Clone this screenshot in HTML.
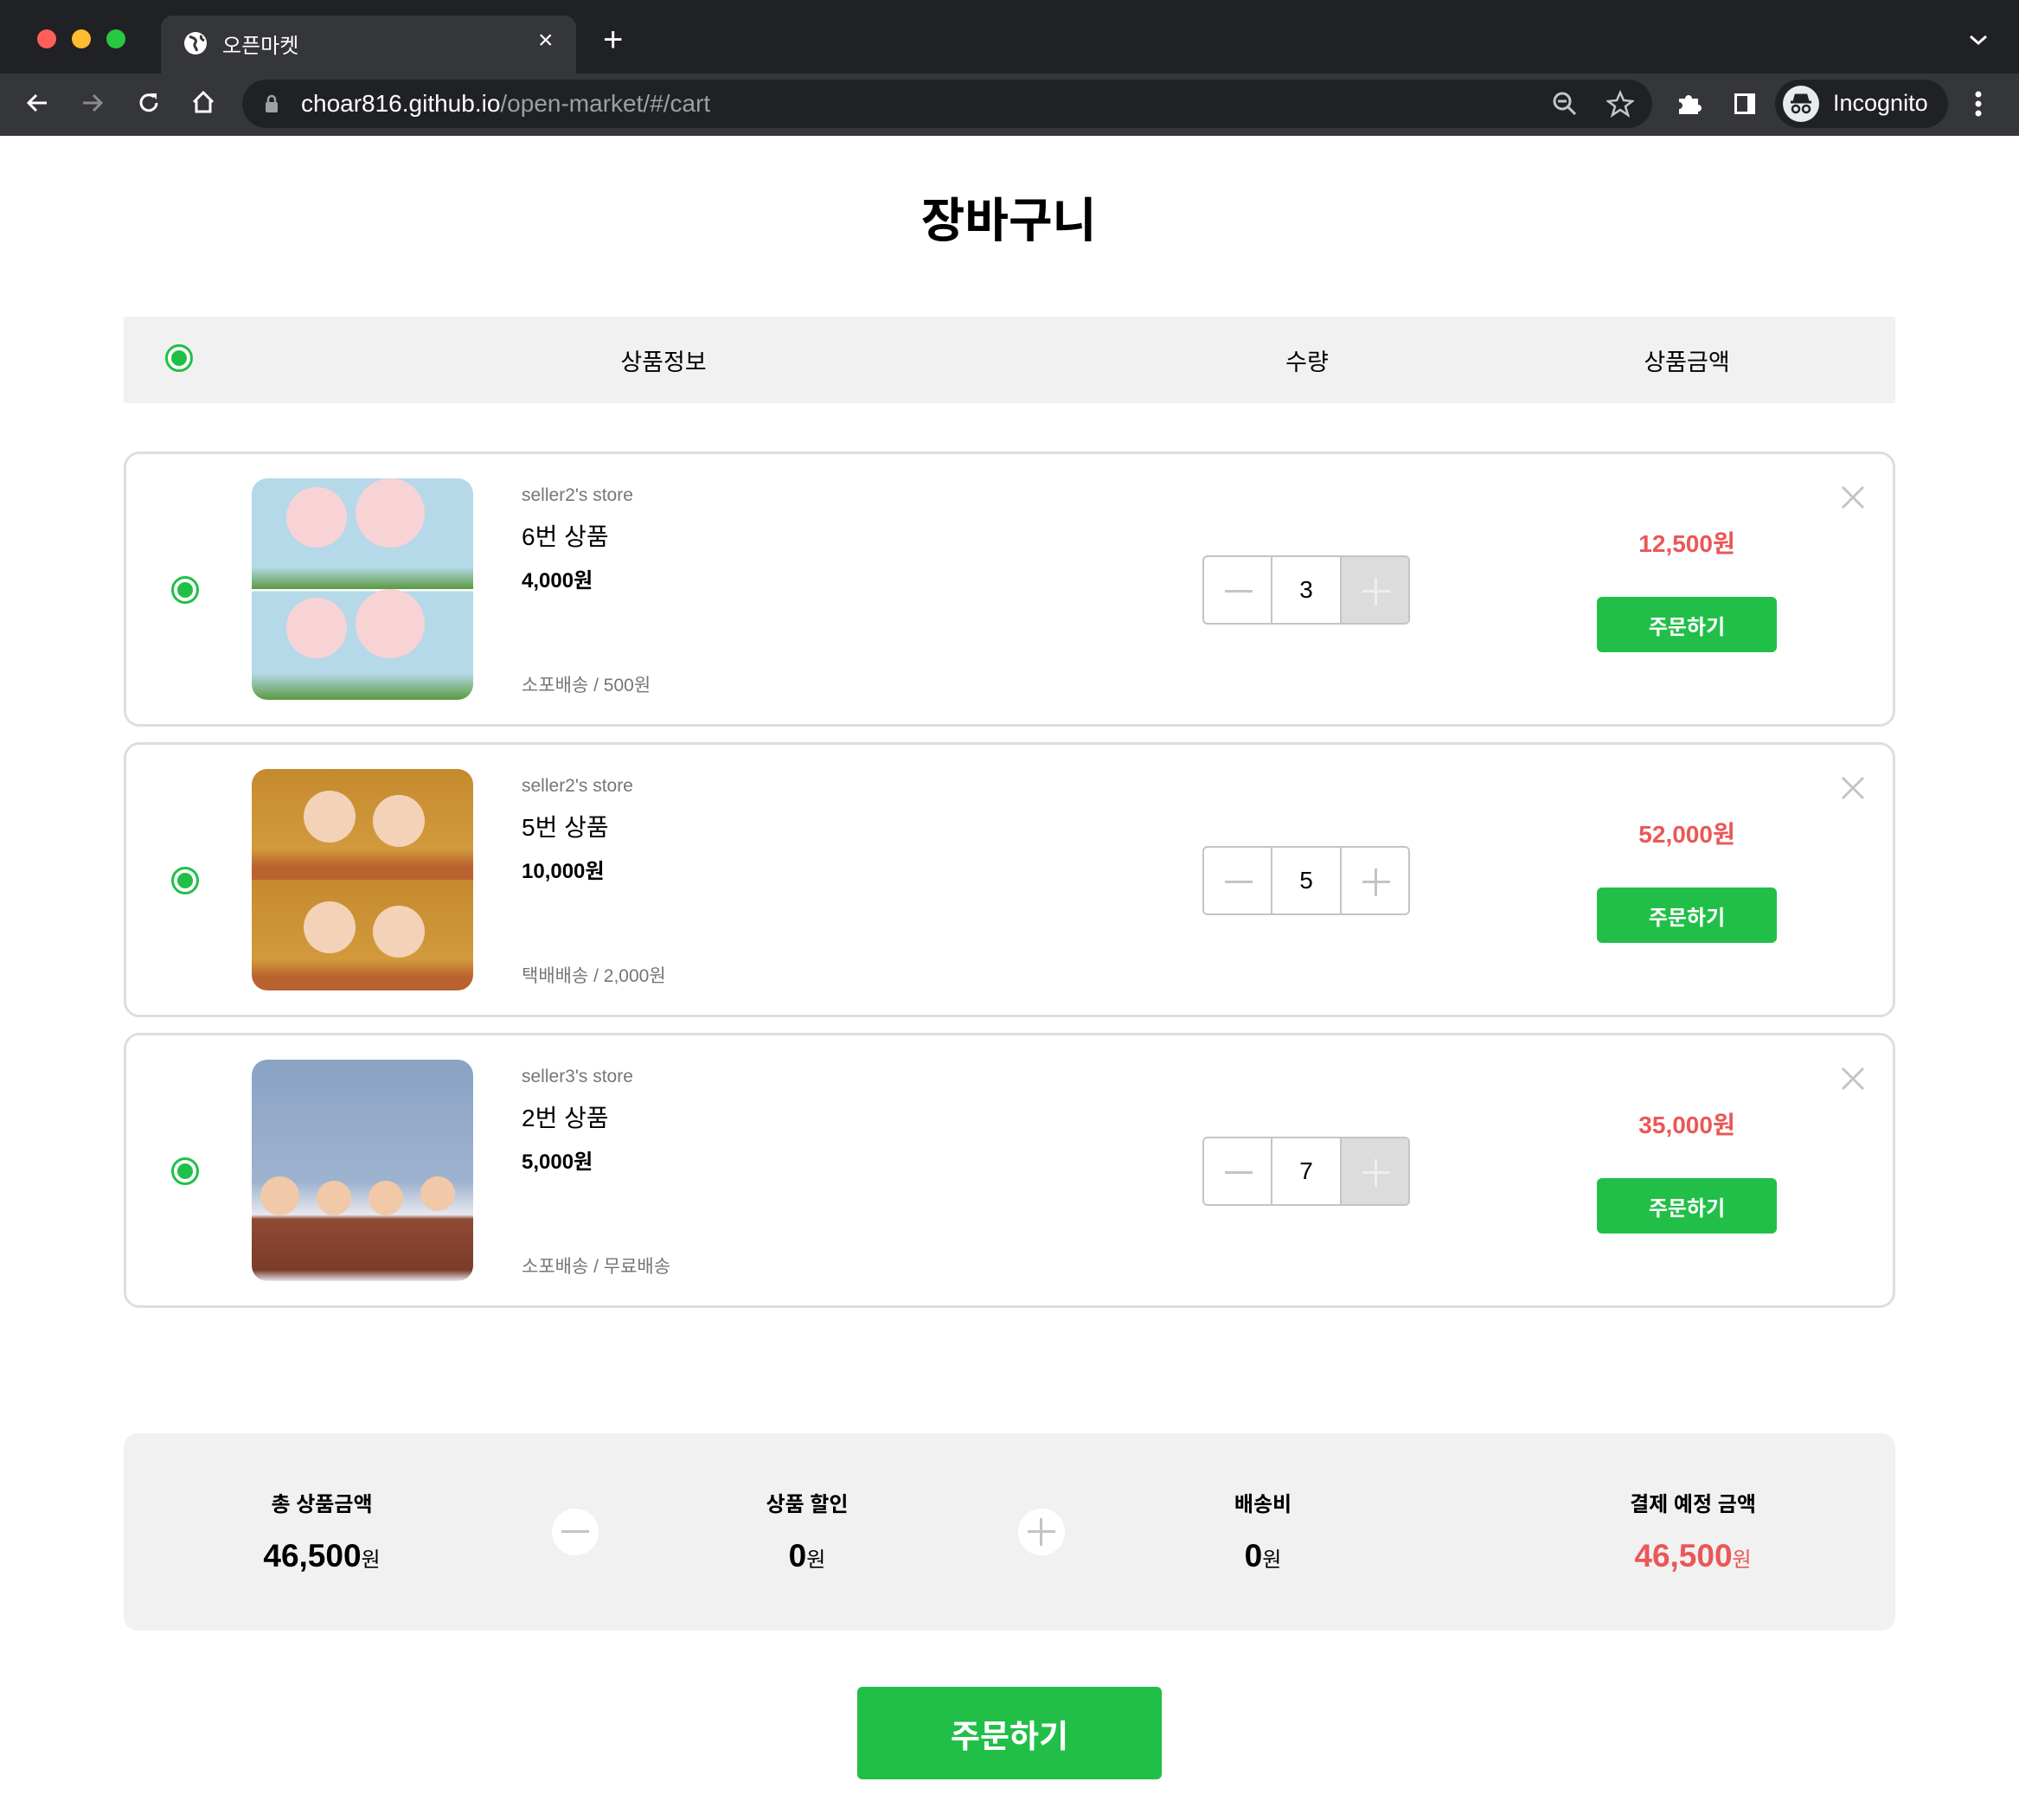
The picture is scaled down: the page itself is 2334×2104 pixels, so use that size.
<!DOCTYPE html>
<html><head><meta charset="utf-8">
<style>
*{box-sizing:border-box;margin:0;padding:0}
body{width:2334px;height:2104px;overflow:hidden;background:#fff;font-family:"Liberation Sans","Noto Sans CJK KR",sans-serif;position:relative}
.abs{position:absolute}
.tabbar{left:0;top:0;width:2334px;height:85px;background:#202124}
.toolbar{left:0;top:85px;width:2334px;height:72px;background:#35363a}
.dot{width:22px;height:22px;border-radius:50%;top:34px}
.tab{left:186px;top:18px;width:480px;height:67px;background:#35363a;border-radius:14px 14px 0 0}
.addr{left:280px;top:92px;width:1630px;height:56px;background:#202124;border-radius:28px}
.c{transform:translateX(-50%);white-space:nowrap;text-align:center}
.radio{width:32px;height:32px;border-radius:50%;border:3px solid #21bf48;background:#fff}
.radio::after{content:"";position:absolute;left:4px;top:4px;width:18px;height:18px;border-radius:50%;background:#21bf48}
.card{left:143px;width:2048px;height:318px;border:3px solid #dedede;border-radius:18px;background:#fff}
.img{left:145px;top:28px;width:256px;height:256px;border-radius:18px;overflow:hidden}
.store{left:457px;top:36px;font-size:21px;color:#767676}
.name{left:457px;top:74px;font-size:28px;color:#000}
.price{left:457px;top:126px;font-size:24px;font-weight:bold;color:#000}
.ship{left:457px;top:251px;font-size:21px;color:#767676}
.qty{left:1244px;top:117px;width:240px;height:80px;border:2px solid #c4c4c4;border-radius:6px;display:flex;overflow:hidden}
.qty div{width:80px;height:100%;display:flex;align-items:center;justify-content:center;font-size:28px;position:relative}
.qty .m{border-right:2px solid #c4c4c4}
.qty .p{border-left:2px solid #c4c4c4}
.qty .p.dis{background:#dcdcdc}
.hl{position:absolute;width:32px;height:3px;background:#c4c4c4;left:24px;top:38px}
.vl{position:absolute;width:3px;height:32px;background:#c4c4c4;left:38px;top:24px}
.dis .hl,.dis .vl{background:#eee}
.tot{left:1659px;top:82px;font-size:28px;font-weight:bold;color:#eb5757;width:290px;text-align:center}
.obtn{left:1700px;top:165px;width:208px;height:64px;background:#21bf48;border-radius:6px;color:#fff;font-size:24px;font-weight:bold;display:flex;align-items:center;justify-content:center}
.x{left:1980px;top:34px;width:32px;height:32px}
.lab{font-size:24px;font-weight:bold;top:1719px}
.val{font-size:37px;font-weight:bold;top:1778px}
.val small{font-size:24px;font-weight:normal}
.circ{width:54px;height:54px;border-radius:50%;background:#fff;top:1744px}
</style></head><body>
<div class="abs tabbar"></div>
<div class="abs dot" style="left:43px;background:#fe5f57"></div>
<div class="abs dot" style="left:83px;background:#febc2e"></div>
<div class="abs dot" style="left:123px;background:#28c840"></div>
<div class="abs tab"></div>
<svg class="abs" style="left:211px;top:35px" width="30" height="30" viewBox="0 0 30 30"><circle cx="15" cy="15" r="13" fill="#fff"/><path d="M8 7c3 2 5 1 7 4s-2 4-1 7 3 3 2 6M22 6c-2 3 1 5 3 6" stroke="#35363a" stroke-width="3" fill="none"/></svg>
<div class="abs" style="left:257px;top:33px;font-size:24px;color:#fff">오픈마켓</div>
<div class="abs" style="left:622px;top:30px;font-size:30px;color:#fff">×</div>
<div class="abs" style="left:697px;top:26px;font-size:40px;color:#fff;line-height:1">+</div>
<svg class="abs" style="left:2275px;top:38px" width="24" height="16"><path d="M3 4l9 8 9-8" stroke="#fff" stroke-width="3" fill="none"/></svg>
<div class="abs toolbar"></div>
<svg class="abs" style="left:28px;top:104px" width="30" height="30"><path d="M26 15H5M14 6l-9 9 9 9" stroke="#fff" stroke-width="3" fill="none"/></svg>
<svg class="abs" style="left:92px;top:104px" width="30" height="30"><path d="M4 15h21M16 6l9 9-9 9" stroke="#8a8b8e" stroke-width="3" fill="none"/></svg>
<svg class="abs" style="left:157px;top:104px" width="30" height="30"><path d="M24 15a9 9 0 1 1-3-7" stroke="#fff" stroke-width="3" fill="none"/><path d="M17 4h7v7z" fill="#fff"/></svg>
<svg class="abs" style="left:220px;top:103px" width="30" height="30"><path d="M4 15L15 4l11 11M7 13v13h16V13" stroke="#fff" stroke-width="3" fill="none"/></svg>
<div class="abs addr"></div>
<svg class="abs" style="left:306px;top:109px" width="16" height="22"><rect x="1" y="9" width="14" height="12" rx="2" fill="#9aa0a6"/><path d="M4 10V6a4 4 0 0 1 8 0v4" stroke="#9aa0a6" stroke-width="2.5" fill="none"/></svg>
<div class="abs" style="left:348px;top:104px;font-size:28px;color:#fff">choar816.github.io<span style="color:#9aa0a6">/open-market/#/cart</span></div>
<svg class="abs" style="left:1794px;top:105px" width="30" height="30"><circle cx="12" cy="12" r="9" stroke="#c4c7c5" stroke-width="3" fill="none"/><path d="M7 12h10M19 19l8 8" stroke="#c4c7c5" stroke-width="3"/></svg>
<svg class="abs" style="left:1857px;top:104px" width="32" height="32"><path d="M16 3l4 9 10 1-8 6 3 10-9-6-9 6 3-10-8-6 10-1z" stroke="#c4c7c5" stroke-width="2.5" fill="none"/></svg>
<svg class="abs" style="left:1937px;top:104px" width="32" height="32"><path d="M4 10h7a4 4 0 0 1 8 0h7v7a4 4 0 0 1 0 8v3H4v-6a4 4 0 0 0 0-8z" fill="#fff"/></svg>
<svg class="abs" style="left:2003px;top:106px" width="28" height="28"><rect x="2" y="2" width="24" height="24" fill="#fff"/><rect x="5" y="5" width="12" height="18" fill="#35363a"/></svg>
<div class="abs" style="left:2052px;top:92px;width:200px;height:56px;border-radius:28px;background:#202124"></div>
<svg class="abs" style="left:2060px;top:98px" width="44" height="44"><circle cx="22" cy="22" r="21" fill="#e8eaed"/><path d="M14 19h16l-2-7h-12zM10 20h24" stroke="#202124" stroke-width="3" fill="#202124"/><circle cx="16" cy="28" r="4" stroke="#202124" stroke-width="2.5" fill="none"/><circle cx="28" cy="28" r="4" stroke="#202124" stroke-width="2.5" fill="none"/></svg>
<div class="abs" style="left:2119px;top:104px;font-size:27px;color:#fff">Incognito</div>
<svg class="abs" style="left:2282px;top:104px" width="10" height="32"><circle cx="5" cy="5" r="3.5" fill="#fff"/><circle cx="5" cy="16" r="3.5" fill="#fff"/><circle cx="5" cy="27" r="3.5" fill="#fff"/></svg>

<div class="abs c" style="left:1166px;top:210px;font-size:55px;font-weight:bold;color:#000">장바구니</div>

<div class="abs" style="left:143px;top:366px;width:2048px;height:100px;background:#f1f1f1"></div>
<div class="abs radio" style="left:191px;top:398px"></div>
<div class="abs c" style="left:767px;top:397px;font-size:27px">상품정보</div>
<div class="abs c" style="left:1511px;top:397px;font-size:27px">수량</div>
<div class="abs c" style="left:1950px;top:397px;font-size:27px">상품금액</div>

<!-- card 1 -->
<div class="abs card" style="top:522px">
 <div class="abs radio" style="left:52px;top:141px"></div>
 <div class="abs img" style="background:linear-gradient(#b5d9e8 0,#b5d9e8 40%,#5a9a40 50%,#fff 50%,#fff 51%,#b5d9e8 51%,#b5d9e8 88%,#5a9a40 100%)">
  <div class="abs" style="left:40px;top:10px;width:70px;height:70px;border-radius:50%;background:#f7d3d6"></div>
  <div class="abs" style="left:120px;top:0;width:80px;height:80px;border-radius:50%;background:#f7d3d6"></div>
  <div class="abs" style="left:40px;top:138px;width:70px;height:70px;border-radius:50%;background:#f7d3d6"></div>
  <div class="abs" style="left:120px;top:128px;width:80px;height:80px;border-radius:50%;background:#f7d3d6"></div>
 </div>
 <div class="abs store">seller2's store</div>
 <div class="abs name">6번 상품</div>
 <div class="abs price">4,000원</div>
 <div class="abs ship">소포배송 / 500원</div>
 <div class="abs qty"><div class="m"><span class="hl"></span></div><div>3</div><div class="p dis"><span class="hl"></span><span class="vl"></span></div></div>
 <div class="abs tot">12,500원</div>
 <div class="abs obtn">주문하기</div>
 <svg class="abs x" viewBox="0 0 32 32"><path d="M4 4l24 24M28 4L4 28" stroke="#c4c4c4" stroke-width="3"/></svg>
</div>

<!-- card 2 -->
<div class="abs card" style="top:858px">
 <div class="abs radio" style="left:52px;top:141px"></div>
 <div class="abs img" style="background:linear-gradient(#c58a2e 0,#d29a3c 36%,#b9622f 44%,#b9622f 50%,#c58a2e 50%,#d29a3c 86%,#b9622f 94%)">
  <div class="abs" style="left:60px;top:25px;width:60px;height:60px;border-radius:50%;background:#f4d2b8"></div>
  <div class="abs" style="left:140px;top:30px;width:60px;height:60px;border-radius:50%;background:#f4d2b8"></div>
  <div class="abs" style="left:60px;top:153px;width:60px;height:60px;border-radius:50%;background:#f4d2b8"></div>
  <div class="abs" style="left:140px;top:158px;width:60px;height:60px;border-radius:50%;background:#f4d2b8"></div>
 </div>
 <div class="abs store">seller2's store</div>
 <div class="abs name">5번 상품</div>
 <div class="abs price">10,000원</div>
 <div class="abs ship">택배배송 / 2,000원</div>
 <div class="abs qty"><div class="m"><span class="hl"></span></div><div>5</div><div class="p"><span class="hl"></span><span class="vl"></span></div></div>
 <div class="abs tot">52,000원</div>
 <div class="abs obtn">주문하기</div>
 <svg class="abs x" viewBox="0 0 32 32"><path d="M4 4l24 24M28 4L4 28" stroke="#c4c4c4" stroke-width="3"/></svg>
</div>

<!-- card 3 -->
<div class="abs card" style="top:1194px">
 <div class="abs radio" style="left:52px;top:141px"></div>
 <div class="abs img" style="background:linear-gradient(#8aa3c3 0,#9db2cf 55%,#e8e8ef 70%,#8e4a35 72%,#7b3c2a 95%,#e6e6ee 100%)">
  <div class="abs" style="left:10px;top:135px;width:45px;height:45px;border-radius:50%;background:#f1c9a8"></div>
  <div class="abs" style="left:75px;top:140px;width:40px;height:40px;border-radius:50%;background:#f1c9a8"></div>
  <div class="abs" style="left:135px;top:140px;width:40px;height:40px;border-radius:50%;background:#f1c9a8"></div>
  <div class="abs" style="left:195px;top:135px;width:40px;height:40px;border-radius:50%;background:#f1c9a8"></div>
 </div>
 <div class="abs store">seller3's store</div>
 <div class="abs name">2번 상품</div>
 <div class="abs price">5,000원</div>
 <div class="abs ship">소포배송 / 무료배송</div>
 <div class="abs qty"><div class="m"><span class="hl"></span></div><div>7</div><div class="p dis"><span class="hl"></span><span class="vl"></span></div></div>
 <div class="abs tot">35,000원</div>
 <div class="abs obtn">주문하기</div>
 <svg class="abs x" viewBox="0 0 32 32"><path d="M4 4l24 24M28 4L4 28" stroke="#c4c4c4" stroke-width="3"/></svg>
</div>

<!-- summary -->
<div class="abs" style="left:143px;top:1657px;width:2048px;height:228px;background:#f1f1f1;border-radius:16px"></div>
<div class="abs c lab" style="left:372px">총 상품금액</div>
<div class="abs c lab" style="left:933px">상품 할인</div>
<div class="abs c lab" style="left:1460px">배송비</div>
<div class="abs c lab" style="left:1957px">결제 예정 금액</div>
<div class="abs c val" style="left:372px">46,500<small>원</small></div>
<div class="abs c val" style="left:933px">0<small>원</small></div>
<div class="abs c val" style="left:1460px">0<small>원</small></div>
<div class="abs c val" style="left:1957px;color:#eb5757">46,500<small>원</small></div>
<div class="abs circ" style="left:638px"><span class="hl" style="left:11px;top:25px"></span></div>
<div class="abs circ" style="left:1177px"><span class="hl" style="left:11px;top:25px"></span><span class="vl" style="left:25px;top:11px"></span></div>

<div class="abs" style="left:991px;top:1950px;width:352px;height:107px;background:#21bf48;border-radius:6px;color:#fff;font-size:37px;font-weight:bold;display:flex;align-items:center;justify-content:center">주문하기</div>
</body></html>
